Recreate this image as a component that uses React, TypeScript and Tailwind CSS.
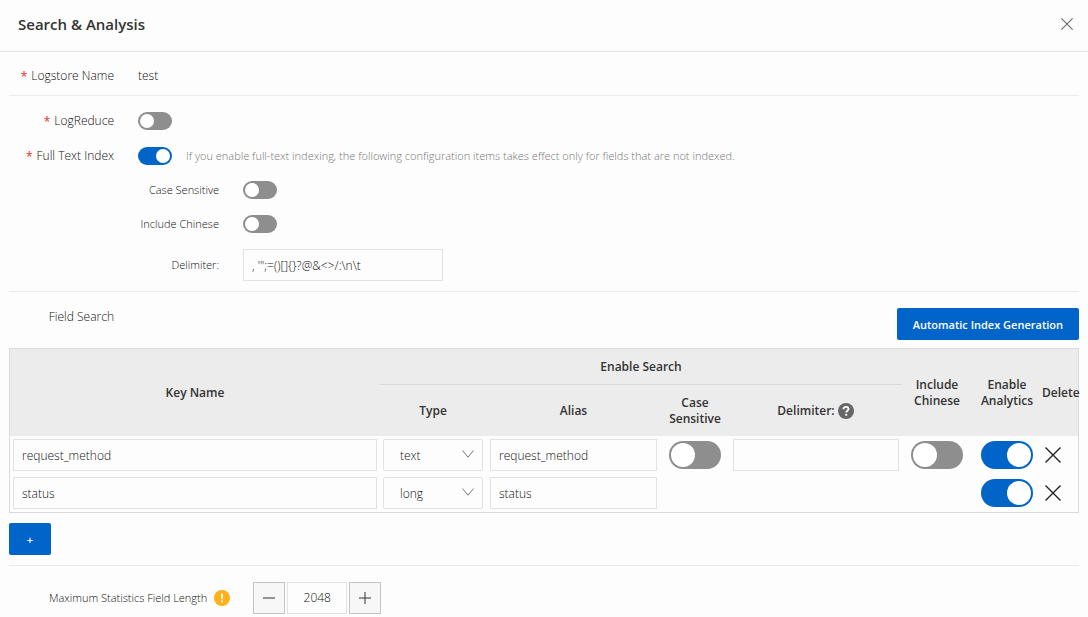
import { useState } from "react";
import type { ReactNode } from "react";
import clsx from "clsx";

interface IndexField {
  name: string;
  type: string;
  alias: string;
  textOptions: boolean;
}

const initialFields: IndexField[] = [
  { name: "request_method", type: "text", alias: "request_method", textOptions: true },
  { name: "status", type: "long", alias: "status", textOptions: false },
];

const inputClass =
  "block h-8 w-full border border-[#e2e2e2] bg-transparent px-2 pt-px text-[12px] text-[#111] outline-none";

interface SwitchProps {
  id?: string;
  label?: string;
  defaultChecked?: boolean;
  large?: boolean;
}

function Switch({ id, label, defaultChecked, large }: SwitchProps) {
  return (
    <input
      id={id}
      type="checkbox"
      role="switch"
      aria-label={label}
      defaultChecked={defaultChecked}
      className={clsx(
        "block shrink-0 cursor-pointer appearance-none rounded-full bg-[#8e8e8e] p-0.5 checked:bg-[#0064c8]",
        "before:block before:rounded-full before:bg-white before:content-['']",
        large
          ? "h-7 w-13 before:size-6 checked:before:ml-6"
          : "h-[18px] w-[34px] before:size-3.5 checked:before:ml-4"
      )}
    />
  );
}

interface RowProps {
  label: string;
  htmlFor?: string;
  required?: boolean;
  className?: string;
  children?: ReactNode;
}

function FormRow({ label, htmlFor, required, className, children }: RowProps) {
  return (
    <div className={clsx("flex items-center gap-6", className)}>
      <label htmlFor={htmlFor} className="flex w-[105px] justify-end gap-1 whitespace-nowrap">
        {required && <span className="pt-0.5 leading-[14px] font-normal text-[#e0301e]">*</span>}
        {label}
      </label>
      {children}
    </div>
  );
}

function SubRow({ label, htmlFor, className, children }: RowProps) {
  return (
    <div className={clsx("flex items-center gap-6 pl-[129px]", className)}>
      <label htmlFor={htmlFor} className="w-[81px] text-right text-[11px] whitespace-nowrap">
        {label}
      </label>
      {children}
    </div>
  );
}

function CloseIcon({ className }: { className?: string }) {
  return (
    <svg viewBox="0 0 16 16" className={className} fill="none" stroke="currentColor" strokeWidth="1.4">
      <path d="M0.5 0.5l15 15M15.5 0.5l-15 15" />
    </svg>
  );
}

function TypeSelect({ value, label }: { value: string; label: string }) {
  return (
    <div className="grid items-center">
      <select
        aria-label={label}
        defaultValue={value}
        className="col-start-1 row-start-1 h-8 w-full appearance-none rounded-xs border border-[#e2e2e2] bg-transparent pt-0.5 pl-4 text-[12px] text-[#111] outline-none"
      >
        <option value="text">text</option>
        <option value="long">long</option>
        <option value="double">double</option>
        <option value="json">json</option>
      </select>
      <svg
        viewBox="0 0 12 8"
        className="pointer-events-none col-start-1 row-start-1 mr-[9px] mb-0.5 h-2 w-3 justify-self-end"
        fill="none"
        stroke="#777"
      >
        <path d="M0.5 0.5L6 7.200l5.500-6.700" />
      </svg>
    </div>
  );
}

function FieldTable({ fields, onDelete }: { fields: IndexField[]; onDelete: (i: number) => void }) {
  return (
    <table className="w-full table-fixed border-separate border-spacing-0 border border-[#dadada]">
      <colgroup>
        <col />
        <col className="w-[106px]" />
        <col className="w-[175px]" />
        <col className="w-[68px]" />
        <col className="w-[173px]" />
        <col className="w-[70px]" />
        <col className="w-[70px]" />
        <col className="w-9" />
      </colgroup>
      <thead className="bg-[#ececec] text-[12px] leading-4 text-[#333]">
        <tr className="h-9">
          <th rowSpan={2} className="font-semibold">Key Name</th>
          <th colSpan={4} className="border-b border-[#d9d9d9] font-semibold">Enable Search</th>
          <th rowSpan={2} className="font-semibold">Include Chinese</th>
          <th rowSpan={2} className="font-semibold">Enable Analytics</th>
          <th rowSpan={2} className="font-semibold">Delete</th>
        </tr>
        <tr className="h-[51px]">
          <th className="font-semibold">Type</th>
          <th className="font-semibold">Alias</th>
          <th className="font-semibold">Case Sensitive</th>
          <th className="font-semibold">
            <span className="flex items-center justify-center gap-[3px]">
              Delimiter:
              <svg viewBox="0 0 16 16" className="size-4" fill="none">
                <circle cx="8" cy="8" r="8" fill="#666" />
                <path d="M5.500 6.300C5.500 4.700 6.500 3.900 8 3.900s2.500 0.900 2.500 2.200c0 1.700-2.300 1.700-2.300 3.500" stroke="#fff" strokeWidth="1.900" />
                <path d="M7.200 10.800h2v1.900h-2z" fill="#fff" />
              </svg>
            </span>
          </th>
        </tr>
      </thead>
      <tbody>
        {fields.map((field, i) => (
          <tr key={i} className="h-[38px]">
            <td className="px-[3px]">
              <input aria-label="Key Name" defaultValue={field.name} className={inputClass} />
            </td>
            <td className="px-[3px]">
              <TypeSelect value={field.type} label="Type" />
            </td>
            <td className="px-1">
              <input aria-label="Alias" defaultValue={field.alias} className={inputClass} />
            </td>
            <td className="px-2">
              {field.textOptions && <Switch large label="Case Sensitive" />}
            </td>
            <td className="pr-[3px] pl-1">
              {field.textOptions && <input aria-label="Delimiter" className={inputClass} />}
            </td>
            <td className="px-[9px]">
              {field.textOptions && <Switch large label="Include Chinese" />}
            </td>
            <td className="px-[9px]">
              <Switch large label="Enable Analytics" defaultChecked />
            </td>
            <td className="px-[3px]">
              <button aria-label="Delete" className="block text-[#222]" onClick={() => onDelete(i)}>
                <CloseIcon className="size-4" />
              </button>
            </td>
          </tr>
        ))}
      </tbody>
    </table>
  );
}

export default function App() {
  const [fields, setFields] = useState(initialFields);
  const [maxLength, setMaxLength] = useState(2048);

  const addField = () =>
    setFields([...fields, { name: "", type: "text", alias: "", textOptions: true }]);

  return (
    <main className="min-h-screen bg-[#fdfdfd] font-['Open_Sans','Noto_Sans',sans-serif] text-[12px] leading-4 font-light text-[#111]">
      <header className="flex h-[52px] items-center justify-between border-b border-[#e5e5e5] pr-2 pb-1 pl-[18px]">
        <h1 className="text-[15px] leading-5 font-semibold text-[#333]">Search &amp; Analysis</h1>
        <button aria-label="Close" className="p-[7px] text-[#666]">
          <CloseIcon className="size-3" />
        </button>
      </header>

      <div className="px-[9px] pb-1">
        <FormRow label="Logstore Name" required className="h-11 border-b border-[#ebebeb] pt-1">
          <span>test</span>
        </FormRow>

        <section className="border-b border-[#ebebeb] pt-2 pb-2.5">
          <FormRow label="LogReduce" htmlFor="log-reduce" required className="h-[34px]">
            <Switch id="log-reduce" />
          </FormRow>
          <FormRow label="Full Text Index" htmlFor="full-text" required className="h-9">
            <Switch id="full-text" defaultChecked />
            <p className="-ml-2.5 text-[11px] text-[#777]">
              If you enable full-text indexing, the following configuration items takes effect only for
              fields that are not indexed.
            </p>
          </FormRow>
          <SubRow label="Case Sensitive" htmlFor="case-sensitive" className="h-8">
            <Switch id="case-sensitive" />
          </SubRow>
          <SubRow label="Include Chinese" htmlFor="include-chinese" className="h-9">
            <Switch id="include-chinese" />
          </SubRow>
          <SubRow label="Delimiter:" htmlFor="delimiter" className="pt-[7px]">
            <div className="w-[200px]">
              <input id="delimiter" defaultValue={`, '";=()[]{}?@&<>/:\\n\\t`} className={inputClass} />
            </div>
          </SubRow>
        </section>

        <section className="border-b border-[#ebebeb] pt-4 pb-2.5">
          <div className="mb-2 flex items-start justify-between">
            <h2 className="w-[105px] pt-px text-right">Field Search</h2>
            <button className="h-8 rounded-xs bg-[#0064c8] px-4 pt-px text-[11px] font-semibold text-white">
              Automatic Index Generation
            </button>
          </div>
          <FieldTable
            fields={fields}
            onDelete={(index) => setFields(fields.filter((_, i) => i !== index))}
          />
          <button
            aria-label="Add field"
            className="mt-2.5 block h-8 w-[42px] rounded-xs bg-[#0064c8] pt-px text-[11px] font-semibold text-white"
            onClick={addField}
          >
            +
          </button>
        </section>

        <div className="flex items-center pt-4 pl-10">
          <label htmlFor="max-length" className="text-[11px]">Maximum Statistics Field Length</label>
          <svg viewBox="0 0 16 16" className="ml-[7px] size-4">
            <circle cx="8" cy="8" r="8" fill="#ffb01a" />
            <path d="M7 3.500h2l-0.300 5.700h-1.400zM7.100 10.600h1.800v1.800h-1.800z" fill="#fff" />
          </svg>
          <div className="ml-[23px] flex gap-0.5">
            <button
              aria-label="Decrease"
              className="flex size-8 items-center justify-center border border-[#c4c4c4] bg-[#f7f7f7]"
              onClick={() => setMaxLength(maxLength - 1)}
            >
              <svg viewBox="0 0 12 12" className="size-3" stroke="#333">
                <path d="M0 6h12" />
              </svg>
            </button>
            <input
              id="max-length"
              value={maxLength}
              onChange={(e) => setMaxLength(Number(e.target.value) || 0)}
              className="h-8 w-[60px] border border-[#e2e2e2] bg-transparent pb-0.5 text-center text-[12px] outline-none"
            />
            <button
              aria-label="Increase"
              className="flex size-8 items-center justify-center border border-[#c4c4c4] bg-[#f7f7f7]"
              onClick={() => setMaxLength(maxLength + 1)}
            >
              <svg viewBox="0 0 12 12" className="size-3" stroke="#333">
                <path d="M0 6h12M6 0v12" />
              </svg>
            </button>
          </div>
        </div>
      </div>
    </main>
  );
}
